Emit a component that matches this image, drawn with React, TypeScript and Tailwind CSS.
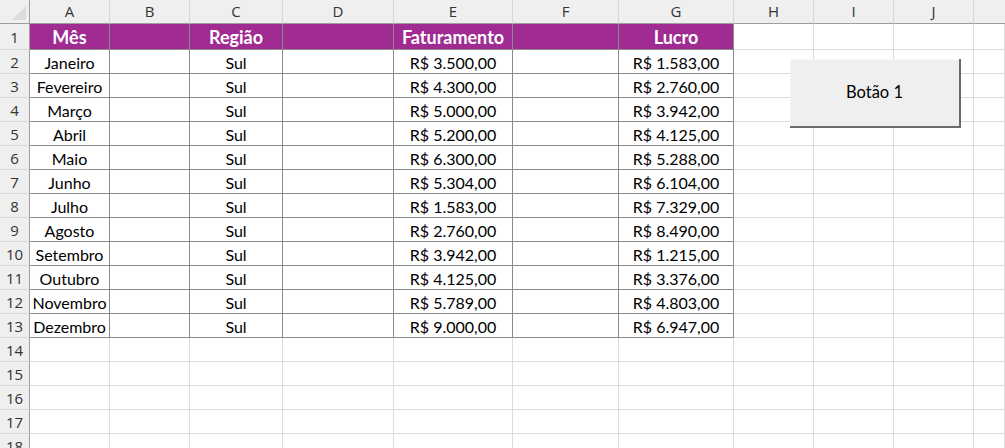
import React from "react";

const cols = ["A", "B", "C", "D", "E", "F", "G", "H", "I", "J", ""];
const widths = [80, 80, 93, 111, 119, 106, 115, 80, 80, 80, 31];

const data: [string, string, string, string][] = [
  ["Janeiro", "Sul", "R$ 3.500,00", "R$ 1.583,00"],
  ["Fevereiro", "Sul", "R$ 4.300,00", "R$ 2.760,00"],
  ["Março", "Sul", "R$ 5.000,00", "R$ 3.942,00"],
  ["Abril", "Sul", "R$ 5.200,00", "R$ 4.125,00"],
  ["Maio", "Sul", "R$ 6.300,00", "R$ 5.288,00"],
  ["Junho", "Sul", "R$ 5.304,00", "R$ 6.104,00"],
  ["Julho", "Sul", "R$ 1.583,00", "R$ 7.329,00"],
  ["Agosto", "Sul", "R$ 2.760,00", "R$ 8.490,00"],
  ["Setembro", "Sul", "R$ 3.942,00", "R$ 1.215,00"],
  ["Outubro", "Sul", "R$ 4.125,00", "R$ 3.376,00"],
  ["Novembro", "Sul", "R$ 5.789,00", "R$ 4.803,00"],
  ["Dezembro", "Sul", "R$ 9.000,00", "R$ 6.947,00"],
];

const font = { fontFamily: "Lato, 'Noto Sans', sans-serif" };

function cellContent(r: number, c: number): string {
  if (r === 1) {
    return ["Mês", "", "Região", "", "Faturamento", "", "Lucro"][c] ?? "";
  }
  if (r >= 2 && r <= 13) {
    const d = data[r - 2];
    if (c === 0) return d[0];
    if (c === 2) return d[1];
    if (c === 4) return d[2];
    if (c === 6) return d[3];
  }
  return "";
}

export default function App() {
  const rows = Array.from({ length: 18 }, (_, i) => i + 1);
  return (
    <div className="relative w-[1005px] h-[448px] overflow-hidden bg-white" style={font}>
      <div className="grid grid-cols-[30px_80px_80px_93px_111px_119px_106px_115px_80px_80px_80px_31px] grid-rows-[24px_26px_repeat(17,24px)]">
        <div className="relative bg-[#efefef] border-r border-b border-[#9e9e9e]">
          <div className="absolute right-[3px] bottom-[3px] w-0 h-0 border-l-[14px] border-l-transparent border-b-[14px] border-b-[#dcdcdc]" />
        </div>
        {cols.map((c, i) => (
          <div
            key={c + i}
            className={`flex items-center justify-center bg-[#efefef] border-b border-b-[#9e9e9e] text-[16px] text-[#333] ${i < 10 ? "border-r border-r-[#d6d6d6]" : ""}`}
            style={{ fontFamily: "'Open Sans', sans-serif", fontSize: 15 }}
          >
            {c}
          </div>
        ))}
        {rows.map((r) => (
          <React.Fragment key={r}>
            <div
              className="flex items-center justify-center pt-[1px] bg-[#efefef] border-r border-r-[#9e9e9e] border-b border-b-[#d6d6d6] text-[16px] text-[#333]"
              style={{ fontFamily: "'Open Sans', sans-serif", fontSize: 15 }}
            >
              {r}
            </div>
            {widths.map((_, c) => {
              const inTable = r <= 13 && c <= 6;
              const header = r === 1 && c <= 6;
              const text = cellContent(r, c);
              let cls = "flex items-center justify-center pt-[2px] whitespace-nowrap overflow-visible ";
              if (header) {
                cls += "bg-[#a02b93] text-white font-bold text-[18px] border-r border-b border-[#8a8a8a] ";
              } else if (inTable) {
                cls += "text-black text-[16px] border-r border-b border-[#8a8a8a] ";
              } else {
                cls += "border-r border-b border-[#dcdcdc] ";
              }
              return (
                <div key={c} className={cls}>
                  {text}
                </div>
              );
            })}
          </React.Fragment>
        ))}
      </div>
      <div className="absolute left-[790px] top-[59px] w-[171px] h-[69px] bg-[#efefef] border-r-2 border-b-2 border-[#6b6b6b] shadow-[inset_1px_1px_0_#f7f7f7] flex items-center justify-center text-[16.5px] text-black">
        Botão 1
      </div>
    </div>
  );
}
